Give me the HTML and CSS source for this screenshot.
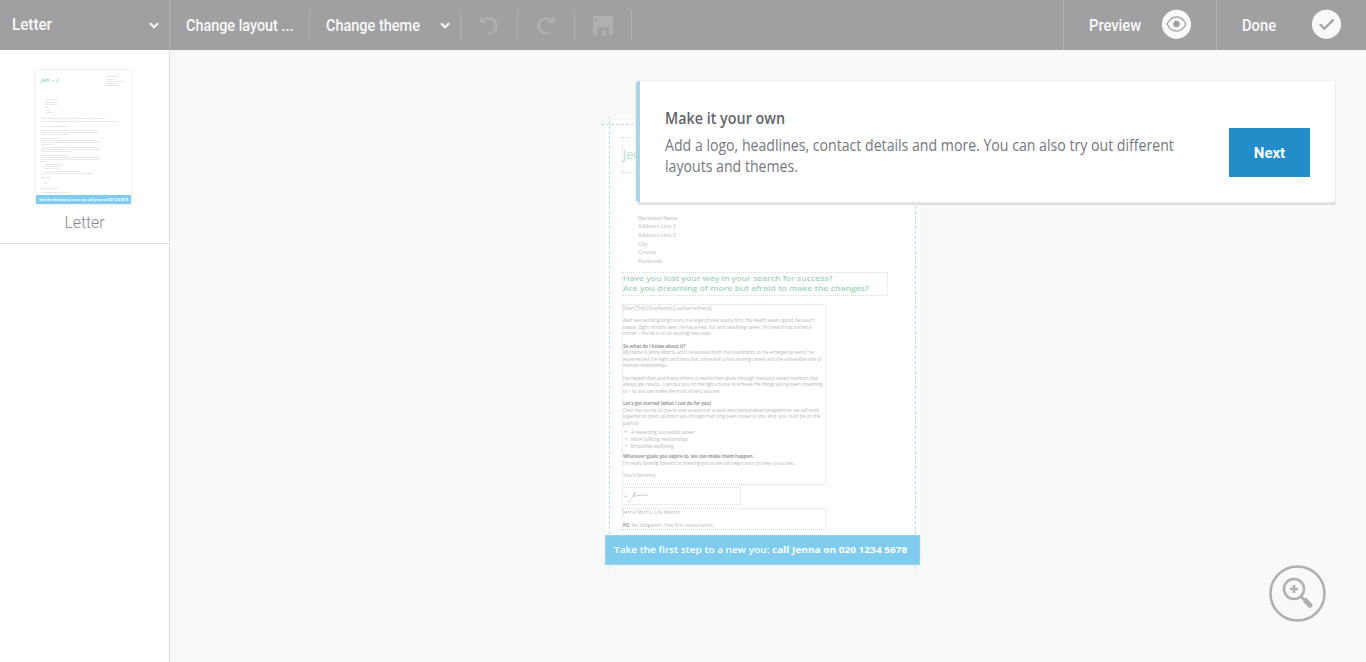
FILE: index.html
```html
<!DOCTYPE html>
<html lang="en">
<head>
<meta charset="utf-8">
<title>Letter</title>
<link rel="stylesheet" href="styles.css">
</head>
<body>
<header class="bar">
  <div class="doc-picker"><span class="t t-letter">Letter</span>
    <svg class="chev" width="10" height="7" viewBox="0 0 10 7"><path d="M1 1.2l4 4 4-4"/></svg></div>
  <div class="cell layout"><span class="t t-layout">Change layout ...</span></div>
  <div class="cell theme"><span class="t t-theme">Change theme</span>
    <svg class="chev" width="10" height="7" viewBox="0 0 10 7"><path d="M1 1.2l4 4 4-4"/></svg></div>
  <div class="cell tool"><svg width="20" height="20" viewBox="0 0 20 20"><path class="curve" d="M4 6C8.500 .8 17.300 3.500 17.300 10.700c0 5-4 8-9 7.300"/><path class="solid" d="M1 1.500v6.500h7.500z"/></svg></div>
  <div class="cell tool"><svg width="20" height="20" viewBox="0 0 20 20"><path class="curve" d="M16 6C11.500 .8 2.700 3.500 2.700 10.700c0 5 4 8 9 7.300"/><path class="solid" d="M19 1.500v6.500h-7.500z"/></svg></div>
  <div class="cell tool"><svg class="disk" width="20" height="20" viewBox="0 0 20 20"><path class="solid" fill-rule="evenodd" d="M1.500 0h17Q20 0 20 1.500V17.500Q20 19.500 18 19.500H16V11H4v8.500H2Q0 19.500 0 17.500V1.500Q0 0 1.500 0zM3 3v2h2V3z"/><path class="solid" d="M9 14.500h4v5H9z"/></svg></div>
  <div class="right preview"><span class="t t-preview">Preview</span>
    <svg width="30" height="30" viewBox="0 0 30 30"><circle class="disc" cx="15.500" cy="15.300" r="14.600"/><path class="eye" d="M6 15C11 5.500 20 5.500 25 15C20 24.500 11 24.500 6 15z"/><circle class="pupil" cx="15.500" cy="15" r="3.200"/></svg></div>
  <div class="right done"><span class="t t-done">Done</span>
    <svg width="30" height="30" viewBox="0 0 30 30"><circle class="disc" cx="15.500" cy="15.300" r="14.600"/><path class="tick" d="M9.500 15.800l3.900 3.900 8.600-8.600"/></svg></div>
</header>
<main class="main">
  <aside class="side">
    <div class="page-item">
      <svg class="thumb" width="95" height="134" viewBox="0 0 95 134">
        <rect width="95" height="134" fill="#fff"/>
        <text x="5" y="12" class="th-sign" textLength="19">Jen ~ J.</text>
        <g class="th-lines">
          <path d="M70 6.500h13M70 9.500h10M70 11.500h18M70 13.500h12M70 15.500h14M9 29.500h13M9 32.500h12M9 34.500h12M9 37.500h3M9 40.500h6M9 42.500h8"/>
          <path d="M5 56.500h27M5 60.500h58M5 62.500h57M5 64.500h27M5 68.500h19M5 70.500h57M5 72.500h60M5 74.500h13M5 77.500h58M5 79.500h60M5 81.500h30M5 85.500h27M5 87.500h59M5 89.500h59M5 91.500h5M8 94.500h18M8 96.500h17M8 98.500h14M5 101.500h39M5 103.500h52M5 107.500h10M9 111.500h2M7 113.500h4M5 118.500h17M5 122.500h27"/>
        </g>
        <text x="5" y="49" class="th-head" textLength="64">Have you lost your way in your search for success?</text>
        <text x="5" y="52" class="th-head" textLength="75">Are you dreaming of more but afraid to make the changes?</text>
        <rect y="125" width="95" height="9" fill="#7fccef"/>
        <text x="3" y="130.800" class="th-call" textLength="89">Take the first step to a new you: call Jenna on 020 1234 5678</text>
      </svg>
      <span class="page-label">Letter</span>
    </div>
  </aside>
  <section class="work">
    <article class="sheet">
      <div class="box logo">Jen</div>
      <div class="address">Recipient Name<br>Address Line 1<br>Address Line 2<br>City<br>County<br>Postcode</div>
      <div class="box headline"><span class="h1">Have you lost your way in your search for success?</span><span class="h2">Are you dreaming of more but afraid to make the changes?</span></div>
      <div class="box body">
        <p>Dear [Title] [FirstName] [LastName/friend],</p>
        <p>Alan was working long hours in a large private equity firm. His health wasn't good, he wasn't<br>happy. Eight months later, he has a new, fun and satisfying career. His health has turned a<br>corner – his life is on an exciting new road.</p>
        <p><b>So what do I know about it?</b><br>My name is Jenna Morris, and I've worked from the boardroom to the emergency ward; I've<br>experienced the highs and lows that come with a fast moving career and the vulnerable side of<br>human relationships.</p>
        <p>I've helped Alan and many others to realise their goals through tried and tested methods that<br>always get results. I can put you on the right course to achieve the things you've been dreaming<br>of – so you can make the most of who you are.</p>
        <p class="tight"><b>Let's get started (what I can do for you)</b><br>Over the course of one-to-one sessions or a dedicated personalised programme, we will work<br>together to open up doors you thought had long been closed to you. And, you could be on the<br>path to:</p>
        <ul><li>A rewarding, successful career</li><li>More fulfilling relationships</li><li>Emotional wellbeing</li></ul>
        <p class="close"><b>Whatever goals you aspire to, we can make them happen.</b><br>I'm really looking forward to meeting you so we can begin your journey to success.</p>
        <p>Yours Sincerely,</p>
      </div>
      <div class="box signature"><svg width="36" height="16" viewBox="0 0 36 16"><path d="M1 8l3 .5M5 13l2 1M7 12l1.500-1M9 9.500l3-5M12 4l-1 5M13 8l3-1 1 .8 3-1 2 1 3-.8"/></svg></div>
      <div class="box signoff"><p>Jenna Morris, Life Mentor</p><p><b>PS:</b> No obligation, free first consultation</p></div>
      <div class="banner"><span class="call">Take the first step to a new you: <b>call Jenna on 020 1234 5678</b></span></div>
      <i class="guide g-left"></i><i class="guide g-right"></i><i class="guide g-top"></i><i class="guide g-bottom"></i>
    </article>
    <div class="tip">
      <div class="tip-text"><h2><span class="tip-title">Make it your own</span></h2>
        <p><span class="tip-copy">Add a logo, headlines, contact details and more. You can also try out different<br>layouts and themes.</span></p></div>
      <button class="next"><span>Next</span></button>
    </div>
    <button class="zoom" aria-label="Zoom in"><svg width="58" height="58" viewBox="0 0 58 58"><circle cx="29.500" cy="29.500" r="27"/><circle cx="26" cy="25" r="10"/><path d="M26 21v8M22 25h8"/><path class="handle-neck" d="M33 32.500l3 3"/><path class="handle" d="M37.500 36.500l4.500 4.700"/></svg></button>
  </section>
</main>
</body>
</html>
```

FILE: styles.css
```css
* { box-sizing: border-box; }
body { margin: 0; width: 1366px; height: 662px; overflow: hidden; background: #f9f9f9; font-family: Roboto, "Liberation Sans", sans-serif; display: flex; flex-direction: column; }
p, h2, ul { margin: 0; padding: 0; }
button { border: 0; padding: 0; font: inherit; }
svg { display: block; flex: none; fill: none; }

/* Toolbar */
.bar { height: 50px; flex: none; display: flex; align-items: center; background: #a0a0a2; color: #f9f9f9; font-size: 16px; font-weight: 500; }
.t { display: block; white-space: nowrap; line-height: 20px; padding-top: 2px; transform-origin: 0 50%; }
.t-letter { transform: scaleX(.95); padding-top: 0; }
.t-layout { transform: scaleX(.9); }
.t-theme { transform: scaleX(.905); }
.t-preview { transform: scaleX(.92); }
.t-done { transform: scaleX(.92); }
.doc-picker { width: 170px; height: 50px; padding: 0 10px 0 12px; display: flex; align-items: center; justify-content: space-between; border-right: 1px solid #b3b3b4; }
.chev { margin-top: 1px; }
.chev path { stroke: #f9f9f9; stroke-width: 2.1; }
.cell { height: 30px; display: flex; align-items: center; border-right: 1px solid #b1b1b2; }
.layout { width: 140px; padding-left: 16px; }
.theme { width: 151px; padding: 0 10px 0 16px; justify-content: space-between; }
.tool { width: 57px; justify-content: center; }
.disk { margin-top: 2px; }
.solid { fill: #b0b0b1; }
.curve { stroke: #b0b0b1; stroke-width: 2.6; }
.right { height: 50px; display: flex; align-items: center; justify-content: space-between; border-left: 1px solid #b3b3b4; padding: 0 25px; }
.right svg { margin-top: -2px; }
.preview { width: 153px; margin-left: auto; }
.done { width: 150px; }
.disc { fill: #f9f9f9; }
.eye { stroke: #a0a0a2; stroke-width: 1.3; }
.pupil { fill: #a0a0a2; }
.tick { stroke: #a0a0a2; stroke-width: 2.2; stroke-linecap: round; }

/* Page list */
.main { flex: 1; display: flex; min-height: 0; }
.side { width: 170px; background: #fff; border-right: 1px solid #dededf; }
.page-item { height: 194px; padding-top: 20px; padding-right: 2px; display: flex; flex-direction: column; align-items: center; gap: 8px; border-bottom: 1px solid #dededf; }
.thumb { box-shadow: 0 0 3px rgba(0,0,0,.13); }
.th-lines { stroke: #e6e6e7; stroke-width: .9; }
.th-sign { font: italic 600 6px "Open Sans", sans-serif; fill: #8fd3b5; }
.th-head { font: 2.3px "Open Sans", sans-serif; fill: #7fc8a5; }
.th-call { font: bold 3px "Open Sans", sans-serif; fill: #fff; }
.page-label { font-size: 16px; line-height: 21px; font-weight: 300; color: #89898d; letter-spacing: -.1px; padding-left: 2px; }

/* Sheet */
.work { flex: 1; position: relative; padding: 70px 0 0 435px; }
.sheet { position: relative; width: 315px; height: 445px; background: #fff; box-shadow: 0 0 2px rgba(0,0,0,.06); display: flex; flex-direction: column; padding: 17px 0 0 17px; color: #b9b9bb; font: 4.8px/6.34px "Open Sans", sans-serif; white-space: nowrap; }
.box { border: 1px dotted #dcdcde; flex: none; }
.logo { width: 110px; height: 36px; padding-top: 6px; color: #89cfac; font-size: 13px; line-height: 20px; font-weight: 300; }
.address { margin: 40px 0 6px 16px; height: 53px; color: #d0d0d2; font: bold 5.3px/8.7px "Liberation Sans", sans-serif; padding-top: .5px; }
.headline { width: 266px; height: 24px; color: #a2d3b8; font-size: 7.6px; line-height: 10px; font-weight: 600; }
.headline span { display: block; width: max-content; transform-origin: 0 50%; }
.h1 { transform: scaleX(1.134); }
.h2 { transform: scaleX(1.138); }
.body { width: 204px; height: 181px; margin-top: 8px; line-height: 6.36px; letter-spacing: -.14px; }
.body p:first-child { margin-top: -.5px; }
.body p { margin-bottom: 6.5px; }
.body p.tight { margin-bottom: 3.6px; }
.body p.close { margin-bottom: 5.6px; }
.body b, .signoff b { color: #9c9c9f; }
.body ul { margin: 0 0 3px 8px; line-height: 7px; list-style: none; }
.body li::before { content: "•"; display: inline-block; width: 6px; margin-left: -6px; color: #8a8a8d; }
.signature { width: 119px; height: 18px; margin-top: 2px; }
.signature path { stroke: #a6a6a8; stroke-width: .6; }
.signoff { width: 204px; height: 22px; margin-top: 3px; letter-spacing: .03px; }
.signoff p + p { margin-top: 6.400px; }
.banner { position: relative; z-index: 1; flex: none; margin: 5px 0 0 -17px; height: 30px; background: #7fccef; border: 1px dotted #b5d5e5; display: flex; align-items: center; color: #fff; padding-left: 8px; font-size: 9.6px; font-weight: 600; }
.call { transform: scaleX(1.05); transform-origin: 0 50%; }
.banner b { font-weight: 700; }
.guide { position: absolute; }
.g-left, .g-right { width: 1px; top: -4px; height: 453px; background: repeating-linear-gradient(#bcd9e9 0 3px, transparent 3px 5px); }
.g-left { left: 4px; }
.g-right { left: 310px; }
.g-top, .g-bottom { height: 1px; left: -4px; width: 323px; background: repeating-linear-gradient(90deg, #bcd9e9 0 3px, transparent 3px 5px); }
.g-top { top: 4px; }
.g-bottom { top: 439px; opacity: .35; }

/* Tour tip */
.tip { position: absolute; z-index: 2; left: 466px; top: 31px; width: 699px; height: 121px; background: #fff; border-left: 4px solid #a6d6e8; border-radius: 3px; box-shadow: 0 0 1px 1px #eee, 1px 3px 0 #dedede; display: flex; align-items: flex-start; justify-content: space-between; padding: 22px 25px 0 25px; color: #62656a; }
.tip-text { width: 530px; white-space: nowrap; font-family: "Open Sans", sans-serif; }
.tip-text span { display: inline-block; transform-origin: 0 50%; }
.tip h2 { font-size: 15.500px; line-height: 31px; font-weight: 600; }
.tip p { font-size: 15.500px; line-height: 21px; padding-top: 1px; color: #74777c; }
.tip-title { transform: scaleX(.925); }
.tip-copy { transform: scaleX(.911); }
.next { width: 81px; height: 49px; margin-top: 25px; background: #238dca; color: #fff; font-size: 15px; font-weight: 700; }
.zoom { position: absolute; left: 1098px; top: 514px; background: none; }
.zoom svg { stroke: #b0b0b1; stroke-width: 2.600; }
.zoom .handle { stroke-width: 5; stroke-linecap: round; }
```
